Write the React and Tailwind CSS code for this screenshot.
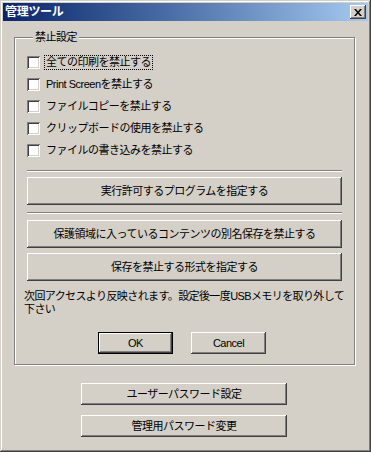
import React from "react";

const FONT = "font-['Liberation_Sans','Noto_Sans_CJK_JP',sans-serif]";
const RAISED =
  "bg-[#d4d0c8] shadow-[inset_-1px_-1px_#404040,inset_1px_1px_#fff,inset_-2px_-2px_#808080]";

const Button = ({ children, className = "", isDefault = false }) => (
  <button
    type="button"
    className={`${className} flex items-center justify-center text-[11px] leading-[13px] tracking-[-0.5px] text-black ${
      isDefault ? "border border-black" : ""
    } ${RAISED}`}
  >
    {children}
  </button>
);

const Checkbox = ({ label, focused }) => (
  <label className="flex h-[22px] items-center gap-[5px]">
    <span className="h-[13px] w-[13px] shrink-0 bg-white shadow-[inset_1px_1px_#808080,inset_-1px_-1px_#fff,inset_2px_2px_#404040,inset_-2px_-2px_#d4d0c8]" />
    <span
      className={`px-[1px] text-[11px] leading-[13px] tracking-[-0.5px] ${
        focused ? "outline outline-1 outline-dotted outline-black" : ""
      }`}
    >
      {label}
    </span>
  </label>
);

const Separator = ({ className = "" }) => (
  <div className={`${className} border-t border-b border-t-[#808080] border-b-white`} />
);

const options = [
  "全ての印刷を禁止する",
  "Print Screenを禁止する",
  "ファイルコピーを禁止する",
  "クリップボードの使用を禁止する",
  "ファイルの書き込みを禁止する",
];

export default function App() {
  return (
    <div
      className={`${FONT} flex h-[452px] w-[371px] flex-col bg-[#d4d0c8] p-[3px] text-black shadow-[inset_-1px_-1px_#404040,inset_1px_1px_#d4d0c8,inset_-2px_-2px_#808080,inset_2px_2px_#fff]`}
    >
      {/* Title bar */}
      <div className="flex h-[18px] items-center justify-between bg-gradient-to-r from-[#0a246a] to-[#a6caf0] pl-[2px] pr-[2px]">
        <span className="text-[12px] font-bold leading-[14px] tracking-[-0.3px] text-white">
          管理ツール
        </span>
        <span className={`flex h-[14px] w-[16px] items-center justify-center ${RAISED}`}>
          <svg width="8" height="7" viewBox="0 0 8 7">
            <path d="M0 0h2l2 2.5L6 0h2L5 3.5 8 7H6L4 4.5 2 7H0l3-3.5z" fill="#000" />
          </svg>
        </span>
      </div>

      {/* Group box */}
      <fieldset className="ml-[11px] mt-[9px] w-[341px] border border-[#808080] px-[12px] pb-[10px] shadow-[1px_1px_0_#fff,inset_1px_1px_0_#fff]">
        <legend className="ml-[6px] bg-[#d4d0c8] px-[2px] text-[11px] leading-[14px] tracking-[-0.5px]">
          禁止設定
        </legend>
        <div className="flex flex-col pt-[7px]">
          {options.map((o, i) => (
            <Checkbox key={o} label={o} focused={i === 0} />
          ))}
        </div>
        <Separator className="mt-[9px]" />
        <Button className="mt-[5px] h-[28px] w-full">実行許可するプログラムを指定する</Button>
        <Separator className="mt-[7px]" />
        <Button className="mt-[6px] h-[28px] w-full">
          保護領域に入っているコンテンツの別名保存を禁止する
        </Button>
        <Button className="mt-[5px] h-[28px] w-full">保存を禁止する形式を指定する</Button>
        <p className="-ml-[3px] -mr-[10px] mt-[9px] whitespace-nowrap text-[11px] leading-[13px] tracking-[-0.6px]">
          次回アクセスより反映されます。設定後一度USBメモリを取り外して
          <br />
          下さい
        </p>
        <div className="mt-[16px] flex justify-center gap-[18px] pr-[5px]">
          <Button isDefault className="h-[22px] w-[75px]">
            OK
          </Button>
          <Button className="h-[22px] w-[75px]">Cancel</Button>
        </div>
      </fieldset>

      <div className="mt-[18px] flex flex-col items-center gap-[10px] pr-[3px]">
        <Button className="h-[22px] w-[206px]">ユーザーパスワード設定</Button>
        <Button className="h-[22px] w-[206px]">管理用パスワード変更</Button>
      </div>
    </div>
  );
}
